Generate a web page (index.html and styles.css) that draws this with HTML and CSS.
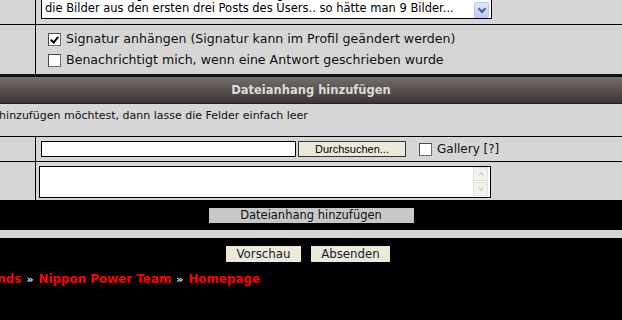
FILE: index.html
```html
<!DOCTYPE html>
<html>

<head>
    <meta charset="UTF-8">
    <title>Antwort erstellen</title>
    <link rel="stylesheet" href="styles.css">
</head>

<body>
    <div class="post">
        <!-- Nachricht -->
        <div class="row row-msg">
            <div class="cell-left"></div>
            <div class="cell-right">
                <div class="box box-msg">
                    <div class="box-text">
                        Bei den Bildern gibt es verschiedene Möglichkeiten. Entweder nimmt man<br>
                        die Bilder aus den ersten drei Posts des Users.. so hätte man 9 Bilder...
                    </div>
                    <span class="scroll-down"></span>
                </div>
            </div>
        </div>
        <!-- Optionen -->
        <div class="row row-opts">
            <div class="cell-left"></div>
            <div class="cell-right">
                <label class="opt"><span class="check checked"></span>Signatur anhängen (Signatur kann im Profil geändert werden)</label>
                <label class="opt"><span class="check"></span>Benachrichtigt mich, wenn eine Antwort geschrieben wurde</label>
            </div>
        </div>
        <!-- Dateianhang -->
        <div class="cat-head">Dateianhang hinzufügen</div>
        <div class="hint"><span class="hint-text">Wenn du keinen Dateianhang hinzufügen möchtest, dann lasse die Felder einfach leer</span></div>
        <div class="row row-file">
            <div class="cell-left"></div>
            <div class="cell-right">
                <span class="file-field"></span>
                <span class="browse">Durchsuchen...</span>
                <label class="gallery"><span class="check"></span>Gallery [?]</label>
            </div>
        </div>
        <div class="row row-desc">
            <div class="cell-left"></div>
            <div class="cell-right">
                <div class="box box-desc">
                    <span class="arrows">
                        <span class="arrow arrow-up"></span>
                        <span class="arrow arrow-down"></span>
                    </span>
                </div>
            </div>
        </div>
        <div class="attach-bar">
            <span class="attach-btn">Dateianhang hinzufügen</span>
        </div>
        <div class="spacer"></div>
    </div>

    <div class="submit">
        <span class="btn">Vorschau</span>
        <span class="btn">Absenden</span>
    </div>

    <div class="crumbs">
        <span class="crumbs-inner">
            <a href="#">Friends</a><span class="sep">»</span><a href="#">Nippon Power Team</a><span class="sep">»</span><a href="#">Homepage</a>
        </span>
    </div>
</body>

</html>
```

FILE: styles.css
```css
body {
    margin: 0;
    background-color: #000;
    font-family: "DejaVu Sans", Verdana, sans-serif;
    color: #000;
    overflow: hidden;
}

.post {
    background-color: #d6d6d6;
}

.row {
    display: grid;
    grid-template-columns: 36px 1fr;
    border-bottom: 1px solid #000;
}

.cell-left {
    border-right: 1px solid #000;
}

.cell-right {
    padding-left: 5px;
}

/* eingabefelder */
.box {
    background-color: #fff;
    border: 1px solid #000;
    position: relative;
}

.row-msg {
    height: 24px;
}

.row-msg .cell-right {
    overflow: hidden;
}

.box-msg {
    width: 449px;
    height: 32px;
    margin-top: -15px;
}

.box-text {
    font-size: 11.5px;
    line-height: 14px;
    padding: 1px 0 0 3px;
    white-space: nowrap;
}

.scroll-down {
    position: absolute;
    right: 2px;
    bottom: 0;
    width: 15px;
    height: 16px;
    box-sizing: border-box;
    border: 1px solid #b5c8f0;
    border-radius: 2px;
    background: linear-gradient(#dfe8fd, #b9cdf6);
}

.scroll-down::after {
    content: "";
    position: absolute;
    left: 4px;
    top: 3px;
    width: 4px;
    height: 4px;
    border-right: 2px solid #4d6185;
    border-bottom: 2px solid #4d6185;
    transform: rotate(45deg);
}

.row-opts {
    height: 49px;
    border-bottom: none;
}

.row-opts .cell-right {
    padding: 6px 0 0 12px;
    display: flex;
    flex-direction: column;
    gap: 5px;
}

.opt {
    display: flex;
    align-items: center;
    font-size: 12.6px;
    line-height: 16px;
    color: #111;
}

.check {
    display: inline-block;
    width: 13px;
    height: 13px;
    box-sizing: border-box;
    border: 1px solid #6f6f6f;
    border-top-color: #4a4a4a;
    border-left-color: #4a4a4a;
    background-color: #fff;
    margin-right: 5px;
    position: relative;
}

.check.checked::after {
    content: "";
    position: absolute;
    left: 3px;
    top: 1px;
    width: 3px;
    height: 6px;
    border-right: 2px solid #000;
    border-bottom: 2px solid #000;
    transform: rotate(40deg);
}

/* kategorie kopf */
.cat-head {
    border-top: 3px solid #111;
    border-bottom: 1px solid #222;
    height: 26px;
    line-height: 27px;
    text-align: center;
    font-size: 11.5px;
    font-weight: bold;
    color: #dcdcdc;
    background: linear-gradient(#756e6b, #3c3534);
}

.hint {
    height: 32px;
    border-bottom: 1px solid #000;
    overflow: hidden;
    white-space: nowrap;
}

.hint-text {
    display: inline-block;
    font-size: 11px;
    margin: 5px 0 0 -167px;
    color: #111;
}

.row-file {
    height: 24px;
}

.row-file .cell-right {
    display: flex;
    align-items: center;
}

.file-field {
    width: 255px;
    height: 16px;
    box-sizing: border-box;
    border: 1px solid #000;
    background-color: #fff;
}

.browse {
    width: 108px;
    height: 16px;
    box-sizing: border-box;
    margin-left: 2px;
    border: 1px solid #333;
    background-color: #ece9d8;
    font-family: "Liberation Sans", Tahoma, sans-serif;
    font-size: 11px;
    line-height: 14px;
    text-align: center;
}

.gallery {
    display: flex;
    align-items: center;
    margin-left: 13px;
    font-size: 12px;
    color: #111;
}

.row-desc {
    height: 38px;
    border-bottom: none;
}

.row-desc .cell-right {
    padding: 4px 0 0 3px;
}

.box-desc {
    width: 450px;
    height: 30px;
}

.arrows {
    position: absolute;
    right: 2px;
    top: 0;
    display: flex;
    flex-direction: column;
    gap: 1px;
}

.arrow {
    width: 15px;
    height: 14px;
    box-sizing: border-box;
    border: 1px solid #e4e2da;
    background-color: #f3f3ee;
    position: relative;
}

.arrow::after {
    content: "";
    position: absolute;
    left: 5px;
    width: 3px;
    height: 3px;
    border-left: 1px solid #c6c6c0;
    border-top: 1px solid #c6c6c0;
}

.arrow-up::after {
    top: 5px;
    transform: rotate(45deg);
}

.arrow-down::after {
    top: 3px;
    transform: rotate(225deg);
}

.attach-bar {
    background-color: #000;
    height: 30px;
    display: flex;
    justify-content: center;
    align-items: center;
}

.attach-btn {
    width: 205px;
    height: 15px;
    line-height: 15px;
    background-color: #c8c8c8;
    text-align: center;
    font-size: 11.5px;
    color: #111;
}

.spacer {
    height: 8px;
    border-bottom: 1px solid #000;
}

/* absenden */
.submit {
    display: flex;
    justify-content: center;
    gap: 10px;
    padding: 7px 6px 0 0;
}

.btn {
    width: 75px;
    height: 16px;
    line-height: 16px;
    background-color: #ece9d8;
    font-size: 11.8px;
    color: #1a1a33;
    text-align: center;
}

.btn + .btn {
    width: 79px;
}

/* navigation */
.crumbs {
    margin-top: 6px;
    white-space: nowrap;
    overflow: hidden;
}

.crumbs-inner {
    display: inline-block;
    margin-left: -28px;
    font-size: 11.9px;
    font-weight: bold;
}

.crumbs a {
    color: #f00;
    text-decoration: none;
}

.sep {
    color: #d8e6ff;
    margin: 0 5px;
    font-size: 11px;
}
```
